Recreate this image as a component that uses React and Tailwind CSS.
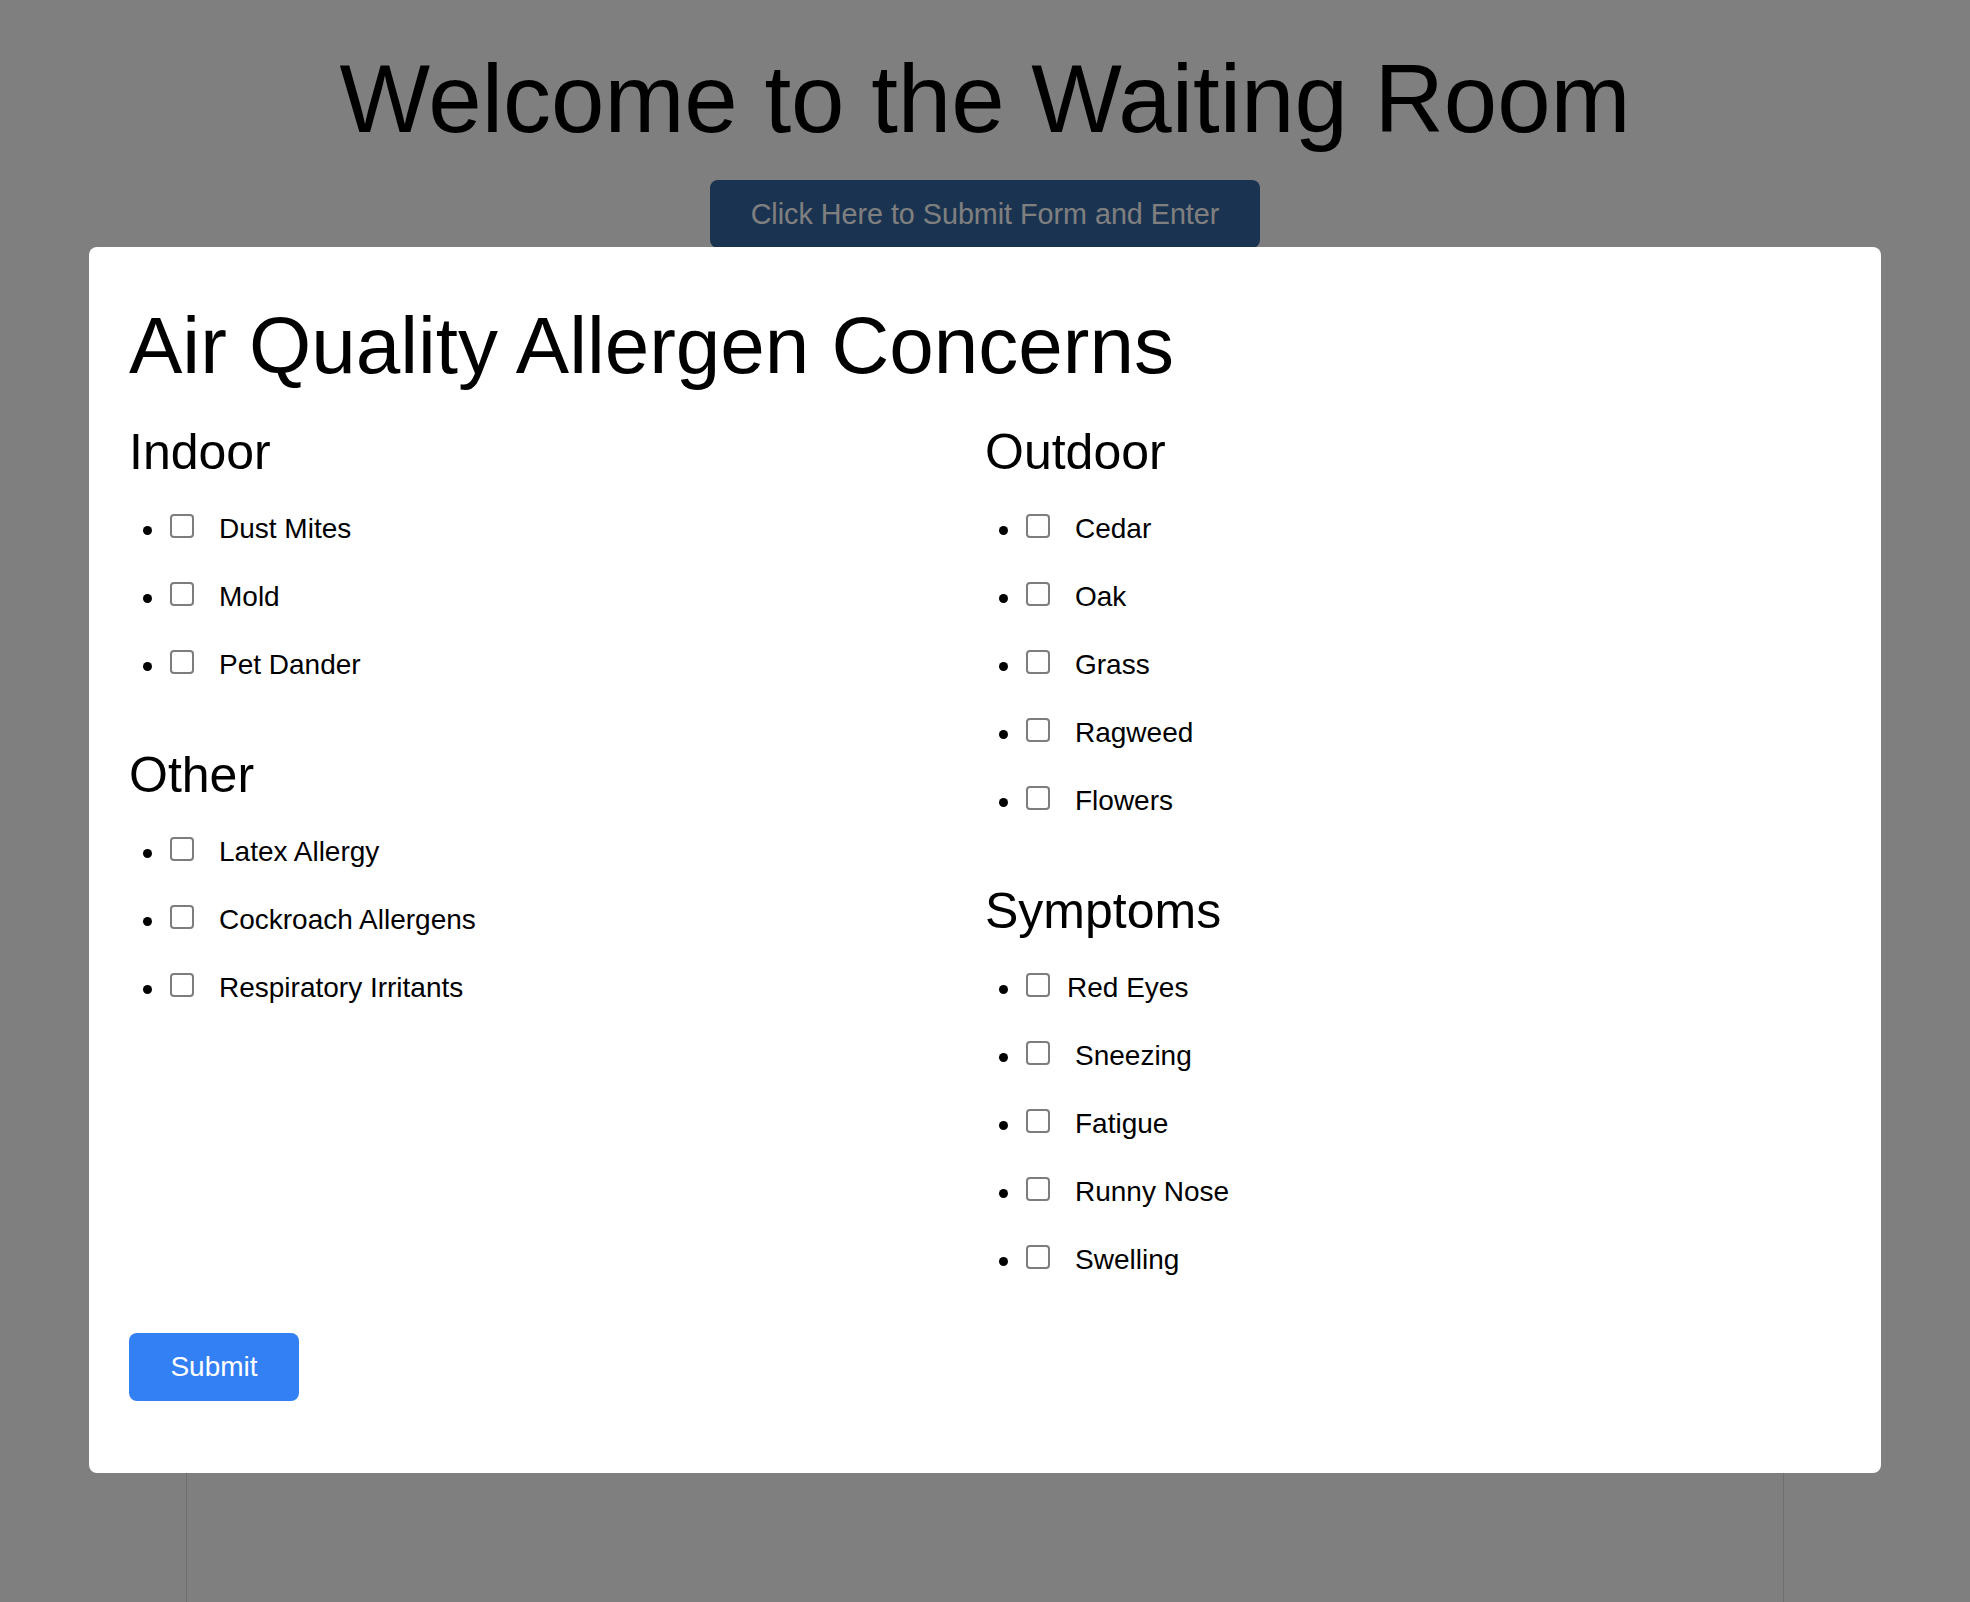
const indoor = ["Dust Mites", "Mold", "Pet Dander"];
const other = ["Latex Allergy", "Cockroach Allergens", "Respiratory Irritants"];
const outdoor = ["Cedar", "Oak", "Grass", "Ragweed", "Flowers"];
const symptoms = ["Red Eyes", "Sneezing", "Fatigue", "Runny Nose", "Swelling"];

function Section({ title, items, tight = [] }) {
  return (
    <div>
      <h3 className="text-[50px] leading-[50px] font-normal">{title}</h3>
      <ul className="mt-[35px] flex flex-col gap-[34px]">
        {items.map((item) => (
          <li key={item} className="flex h-[34px]">
            <span className="mt-[14px] ml-[14px] w-[9px] h-[9px] rounded-full bg-black shrink-0" />
            <input
              type="checkbox"
              className="appearance-none mt-[2px] ml-[18px] w-[24px] h-[24px] rounded-[4px] border-2 border-[#7d7d7d] bg-white shrink-0"
            />
            <label
              className={
                "text-[28px] leading-[34px] " +
                (tight.includes(item) ? "ml-[17px]" : "ml-[25px]")
              }
            >
              {item}
            </label>
          </li>
        ))}
      </ul>
    </div>
  );
}

export default function App() {
  return (
    <div
      className="min-h-screen bg-white text-black flex flex-col items-center"
      style={{ fontFamily: '"Liberation Sans", Arial, sans-serif' }}
    >
      <h1 className="pt-[51px] text-[96px] leading-[96px] font-normal">
        Welcome to the Waiting Room
      </h1>
      <button className="mt-[33px] w-[550px] py-[18px] rounded-[8px] bg-[#3466a0] text-white text-[28.7px] leading-[32px]">
        Click Here to Submit Form and Enter
      </button>
      <div className="mt-[20px] w-[1598px] flex-1 border-x border-[#dcdcdc]" />

      <div className="fixed inset-0 bg-black/50 flex justify-center items-start pt-[247px]">
        <div className="w-[1792px] bg-white rounded-[8px] px-[40px] pt-[59px] pb-[72px]">
          <h2 className="text-[80px] leading-[80px] font-normal">
            Air Quality Allergen Concerns
          </h2>
          <div className="mt-[41px] grid grid-cols-2">
            <div className="flex flex-col gap-[68px]">
              <Section title="Indoor" items={indoor} />
              <Section title="Other" items={other} />
            </div>
            <div className="flex flex-col gap-[68px]">
              <Section title="Outdoor" items={outdoor} />
              <Section title="Symptoms" items={symptoms} tight={["Red Eyes"]} />
            </div>
          </div>
          <button className="mt-[56px] w-[170px] h-[68px] rounded-[8px] bg-[#3380f5] text-white text-[28px] leading-[68px]">
            Submit
          </button>
        </div>
      </div>
    </div>
  );
}
